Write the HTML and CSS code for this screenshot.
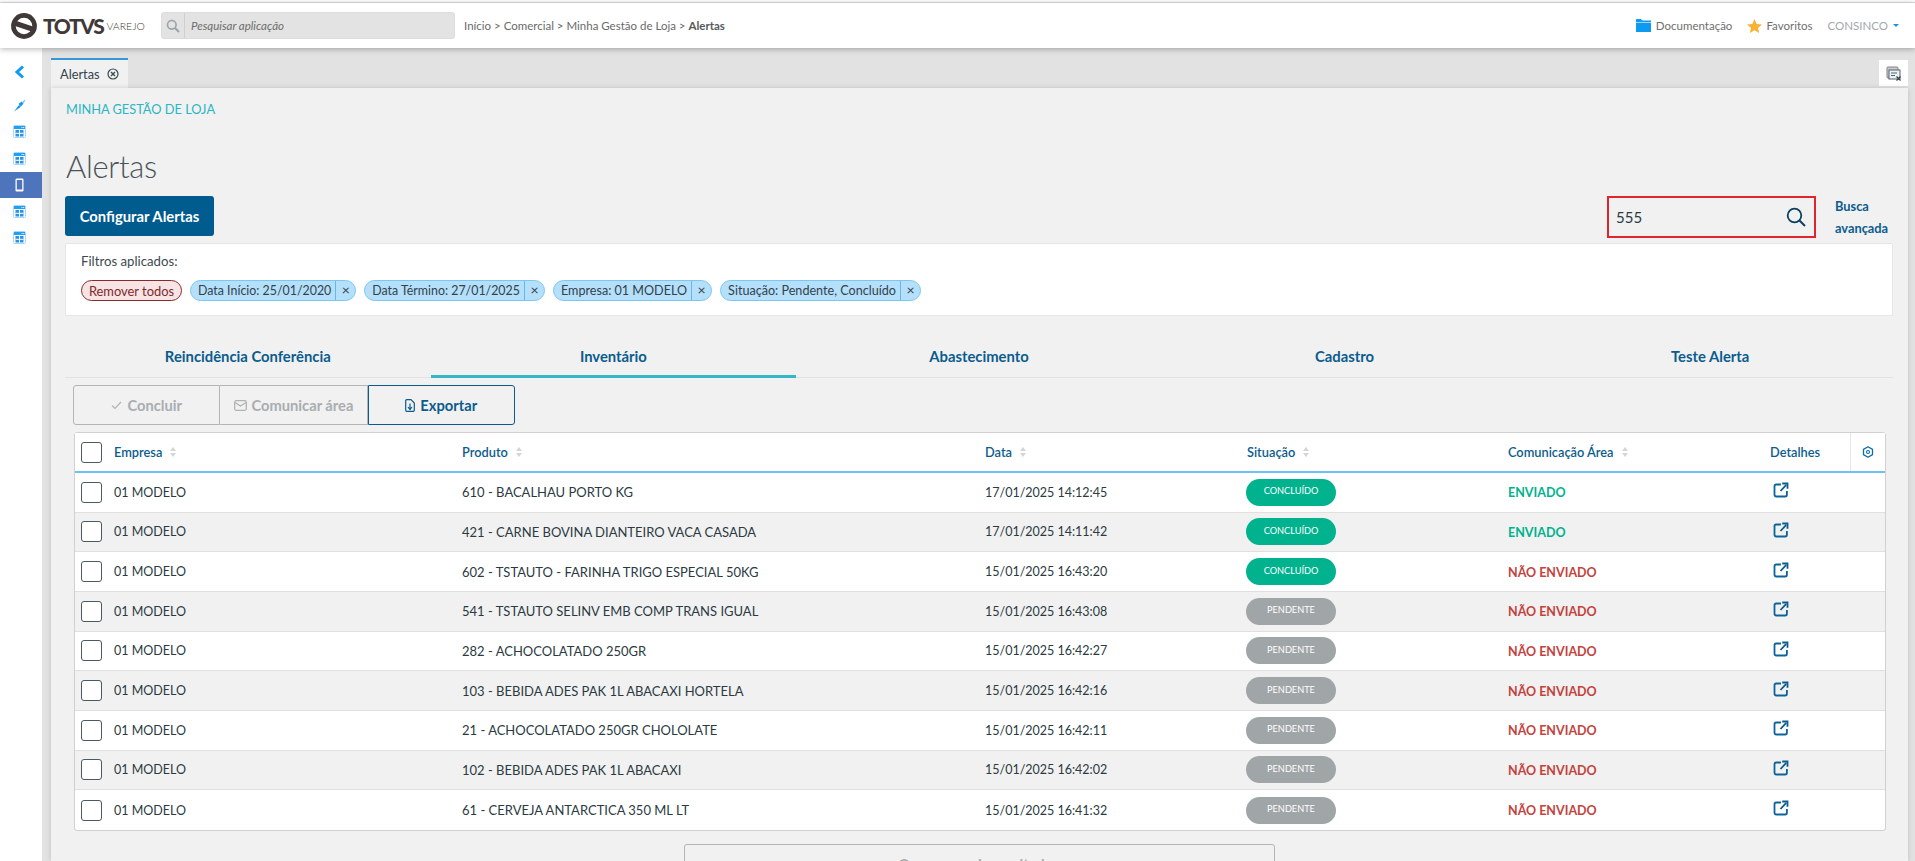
FILE: index.html
```html
<!DOCTYPE html>
<html lang="pt-BR">
<head>
<meta charset="utf-8">
<title>Alertas</title>
<link rel="stylesheet" href="styles.css">
</head>
<body>
<svg class="defs" width="0" height="0" aria-hidden="true">
  <symbol id="i-cal" viewBox="0 0 13 13">
    <rect x=".5" y=".5" width="12" height="12" rx="1" fill="#fff" stroke="#a9d6fb"/>
    <rect x="1" y="1" width="11" height="3" fill="#1ea0f5"/>
    <rect x="2.5" y="5" width="3.5" height="6.5" fill="#2a95e6"/>
    <rect x="7" y="5" width="3.5" height="6.5" fill="#2a95e6"/>
    <rect x="2.5" y="7.8" width="8" height="1" fill="#fff"/>
    <rect x="8.5" y="2" width="1" height="1" fill="#fff"/>
    <rect x="10.2" y="2" width="1" height="1" fill="#fff"/>
  </symbol>
  <symbol id="i-open" viewBox="0 0 16 16">
    <path d="M8 2.5H3.2A1.7 1.7 0 0 0 1.5 4.2v8.6a1.7 1.7 0 0 0 1.7 1.7h9a1.7 1.7 0 0 0 1.7-1.7V9" fill="none" stroke="#0b6499" stroke-width="1.8"/>
    <path d="M7.5 9 13 3.2M9.2 1.5h5.3v5.3" fill="none" stroke="#0b5c8e" stroke-width="1.8"/>
  </symbol>
  <symbol id="i-sort" viewBox="0 0 6 10">
    <path d="M3 0 6 4H0zM3 10 0 6h6z" fill="#d3d6d8"/>
  </symbol>
</svg>

<div class="topline"></div>
<header class="topbar">
  <div class="brand">
    <svg class="brand-mark" viewBox="0 0 26 26"><circle cx="13" cy="13" r="10.6" fill="none" stroke="#3f3a38" stroke-width="4.6"/><path d="M4 7.5 22 13.500v5.500L4 13z" fill="#3f3a38"/></svg>
    <span class="brand-name">TOTVS</span>
    <span class="brand-sub">VAREJO</span>
  </div>
  <div class="appsearch">
    <span class="appsearch-icon"><svg width="14" height="14" viewBox="0 0 14 14"><circle cx="5.8" cy="5.8" r="4.3" fill="none" stroke="#9aa3a8" stroke-width="1.6"/><path d="m9 9 4 4" stroke="#9aa3a8" stroke-width="2"/></svg></span>
    <span class="appsearch-text">Pesquisar aplicação</span>
  </div>
  <nav class="crumbs">Início &gt; Comercial &gt; Minha Gestão de Loja &gt; <b>Alertas</b></nav>
  <div class="toplinks">
    <svg class="folder" width="15" height="13" viewBox="0 0 15 13"><path d="M0 1.2C0 .5.5 0 1.2 0h3.6l1.4 1.6H15V3H0z" fill="#0f9af2"/><rect y="3.6" width="15" height="9.4" fill="#0f9af2"/></svg>
    <span class="toplink">Documentação</span>
    <svg class="star" width="15" height="14" viewBox="0 0 15 14"><path d="m7.5 0 2.2 4.9 5.3.5-4 3.5 1.2 5.1-4.7-2.7L2.8 14 4 8.9 0 5.4l5.3-.5z" fill="#f9b233"/></svg>
    <span class="toplink">Favoritos</span>
    <span class="userlink">CONSINCO</span>
    <span class="caret"></span>
  </div>
</header>

<div class="shell">
  <aside class="sidebar">
    <div class="side-back"><svg width="11" height="14" viewBox="0 0 11 14"><path d="M9 1.5 3 7l6 5.5" fill="none" stroke="#0f9af2" stroke-width="3"/></svg></div>
    <div class="side-item"><svg width="13" height="13" viewBox="0 0 13 13"><path d="M1 12.5 6 6l2 1.8z" fill="#1a8fe6"/><path d="m5.5 5 3-2.5 2 2-2.5 3z" fill="#0f9af2"/><path d="M9 3.500 11.500.8l.8.8L10 4.500z" fill="#6cc0f7"/></svg></div>
    <div class="side-item"><svg class="cal"><use href="#i-cal"/></svg></div>
    <div class="side-item"><svg class="cal"><use href="#i-cal"/></svg></div>
    <div class="side-item is-active"><svg width="9" height="14" viewBox="0 0 9 14"><rect x=".5" y=".5" width="8" height="13" rx="1.2" fill="#fff"/><rect x="1.8" y="2" width="5.4" height="9.5" fill="#4e75bb"/></svg></div>
    <div class="side-item"><svg class="cal"><use href="#i-cal"/></svg></div>
    <div class="side-item"><svg class="cal"><use href="#i-cal"/></svg></div>
  </aside>

  <div class="workspace">
    <div class="tabbar">
      <div class="doc-tab">Alertas
        <svg width="12" height="12" viewBox="0 0 12 12"><circle cx="6" cy="6" r="5" fill="none" stroke="#3d4a52" stroke-width="1.2"/><path d="m4 4 4 4M8 4 4 8" stroke="#3d4a52" stroke-width="1.4"/></svg>
      </div>
      <div class="tool-box"><svg width="15" height="15" viewBox="0 0 15 15"><rect x="1" y="1" width="11" height="11" rx="1" fill="#c7cdd1" stroke="#8d7f86"/><rect x="3" y="4" width="11" height="9" fill="#eef0f1" stroke="#4e6472"/><path d="M5 7h6M5 9.500h4" stroke="#4e6472"/><path d="m10.500 10.500 4 4M14.500 10.500l-4 4" stroke="#33424c" stroke-width="1.2"/></svg></div>
    </div>

    <main class="content">
      <div class="section-name">MINHA GESTÃO DE LOJA</div>
      <h1 class="page-title">Alertas</h1>

      <div class="head-row">
        <button class="btn-primary">Configurar Alertas</button>
        <div class="head-right">
          <div class="quicksearch">
            <span>555</span>
            <svg width="20" height="20" viewBox="0 0 20 20"><circle cx="8.500" cy="8.500" r="6.800" fill="none" stroke="#0b3f60" stroke-width="1.800"/><path d="m13.500 13.500 5.500 5.500" stroke="#0b3f60" stroke-width="2"/></svg>
          </div>
          <a class="advanced">Busca avançada</a>
        </div>
      </div>

      <section class="filters">
        <div class="filters-title">Filtros aplicados:</div>
        <div class="chips">
          <span class="chip-remove">Remover todos</span>
          <span class="chip"><span class="chip-label">Data Início: 25/01/2020</span><span class="chip-x">×</span></span>
          <span class="chip"><span class="chip-label">Data Término: 27/01/2025</span><span class="chip-x">×</span></span>
          <span class="chip chip-wide"><span class="chip-label">Empresa: 01 MODELO</span><span class="chip-x">×</span></span>
          <span class="chip chip-wide"><span class="chip-label">Situação: Pendente, Concluído</span><span class="chip-x">×</span></span>
        </div>
      </section>

      <nav class="tabs">
        <div class="tab">Reincidência Conferência</div>
        <div class="tab is-active">Inventário</div>
        <div class="tab">Abastecimento</div>
        <div class="tab">Cadastro</div>
        <div class="tab">Teste Alerta</div>
      </nav>

      <div class="actions">
        <button class="act is-disabled"><svg width="11" height="9" viewBox="0 0 11 9"><path d="m1 4.500 3 3 6-6.500" fill="none" stroke="#b0b3b5" stroke-width="1.2"/></svg>Concluir</button>
        <button class="act is-disabled"><svg width="13" height="11" viewBox="0 0 13 11"><rect x=".7" y=".7" width="11.6" height="9.6" rx="1.5" fill="none" stroke="#b0b3b5" stroke-width="1.3"/><path d="m1 2.500 5.500 3.500 5.500-3.500" fill="none" stroke="#b0b3b5" stroke-width="1.2"/></svg>Comunicar área</button>
        <button class="act is-on"><svg width="10" height="13" viewBox="0 0 10 13"><path d="M6 .7H1.700a1 1 0 0 0-1 1v9.600a1 1 0 0 0 1 1h6.600a1 1 0 0 0 1-1V4z" fill="none" stroke="#0b5c8e" stroke-width="1.2"/><path d="M5 4.500v5.500M3 8l2 2.500L7 8" fill="none" stroke="#0b5c8e" stroke-width="1.2"/></svg>Exportar</button>
      </div>

      <section class="grid">
        <div class="row row-head">
          <div class="cell first"><span class="check"></span>Empresa <svg class="sort"><use href="#i-sort"/></svg></div>
          <div class="cell">Produto <svg class="sort"><use href="#i-sort"/></svg></div>
          <div class="cell">Data <svg class="sort"><use href="#i-sort"/></svg></div>
          <div class="cell">Situação <svg class="sort"><use href="#i-sort"/></svg></div>
          <div class="cell">Comunicação Área <svg class="sort"><use href="#i-sort"/></svg></div>
          <div class="cell">Detalhes</div>
          <div class="cell gear-cell"><svg width="12" height="12" viewBox="0 0 12 12"><path d="M6 .8 10.500 3.400v5.200L6 11.200 1.500 8.600V3.400z" fill="none" stroke="#0b6ea8" stroke-width="1.3" stroke-linejoin="round"/><circle cx="6" cy="6" r="1.500" fill="none" stroke="#0b6ea8" stroke-width="1.1"/></svg></div>
        </div>

        <div class="row"><div class="cell first"><span class="check"></span>01 MODELO</div><div class="cell">610 - BACALHAU PORTO KG</div><div class="cell">17/01/2025 14:12:45</div><div class="cell"><span class="pill ok">CONCLUÍDO</span></div><div class="cell"><span class="sent">ENVIADO</span></div><div class="cell"><svg class="open"><use href="#i-open"/></svg></div><div class="cell"></div></div>
        <div class="row"><div class="cell first"><span class="check"></span>01 MODELO</div><div class="cell">421 - CARNE BOVINA DIANTEIRO VACA CASADA</div><div class="cell">17/01/2025 14:11:42</div><div class="cell"><span class="pill ok">CONCLUÍDO</span></div><div class="cell"><span class="sent">ENVIADO</span></div><div class="cell"><svg class="open"><use href="#i-open"/></svg></div><div class="cell"></div></div>
        <div class="row"><div class="cell first"><span class="check"></span>01 MODELO</div><div class="cell">602 - TSTAUTO - FARINHA TRIGO ESPECIAL 50KG</div><div class="cell">15/01/2025 16:43:20</div><div class="cell"><span class="pill ok">CONCLUÍDO</span></div><div class="cell"><span class="unsent">NÃO ENVIADO</span></div><div class="cell"><svg class="open"><use href="#i-open"/></svg></div><div class="cell"></div></div>
        <div class="row"><div class="cell first"><span class="check"></span>01 MODELO</div><div class="cell">541 - TSTAUTO SELINV EMB COMP TRANS IGUAL</div><div class="cell">15/01/2025 16:43:08</div><div class="cell"><span class="pill wait">PENDENTE</span></div><div class="cell"><span class="unsent">NÃO ENVIADO</span></div><div class="cell"><svg class="open"><use href="#i-open"/></svg></div><div class="cell"></div></div>
        <div class="row"><div class="cell first"><span class="check"></span>01 MODELO</div><div class="cell">282 - ACHOCOLATADO 250GR</div><div class="cell">15/01/2025 16:42:27</div><div class="cell"><span class="pill wait">PENDENTE</span></div><div class="cell"><span class="unsent">NÃO ENVIADO</span></div><div class="cell"><svg class="open"><use href="#i-open"/></svg></div><div class="cell"></div></div>
        <div class="row"><div class="cell first"><span class="check"></span>01 MODELO</div><div class="cell">103 - BEBIDA ADES PAK 1L ABACAXI HORTELA</div><div class="cell">15/01/2025 16:42:16</div><div class="cell"><span class="pill wait">PENDENTE</span></div><div class="cell"><span class="unsent">NÃO ENVIADO</span></div><div class="cell"><svg class="open"><use href="#i-open"/></svg></div><div class="cell"></div></div>
        <div class="row"><div class="cell first"><span class="check"></span>01 MODELO</div><div class="cell">21 - ACHOCOLATADO 250GR CHOLOLATE</div><div class="cell">15/01/2025 16:42:11</div><div class="cell"><span class="pill wait">PENDENTE</span></div><div class="cell"><span class="unsent">NÃO ENVIADO</span></div><div class="cell"><svg class="open"><use href="#i-open"/></svg></div><div class="cell"></div></div>
        <div class="row"><div class="cell first"><span class="check"></span>01 MODELO</div><div class="cell">102 - BEBIDA ADES PAK 1L ABACAXI</div><div class="cell">15/01/2025 16:42:02</div><div class="cell"><span class="pill wait">PENDENTE</span></div><div class="cell"><span class="unsent">NÃO ENVIADO</span></div><div class="cell"><svg class="open"><use href="#i-open"/></svg></div><div class="cell"></div></div>
        <div class="row"><div class="cell first"><span class="check"></span>01 MODELO</div><div class="cell">61 - CERVEJA ANTARCTICA 350 ML LT</div><div class="cell">15/01/2025 16:41:32</div><div class="cell"><span class="pill wait">PENDENTE</span></div><div class="cell"><span class="unsent">NÃO ENVIADO</span></div><div class="cell"><svg class="open"><use href="#i-open"/></svg></div><div class="cell"></div></div>
      </section>

      <button class="load-more">Carregar mais resultados</button>
    </main>
  </div>
</div>
</body>
</html>
```

FILE: styles.css
```css
* { box-sizing: border-box; }
html, body { margin: 0; height: 861px; overflow: hidden; }
body { font-family: "Lato", "Open Sans", sans-serif; font-size: 12px; color: #2b3a42; background: #f1f1f1; }
.defs { display: block; height: 0; }

.topline { height: 3px; background: #fff; border-bottom: 1px solid #e0e0e0; }
.topbar { position: relative; z-index: 2; height: 45px; background: #fff; box-shadow: 0 1px 6px rgba(0,0,0,.3); display: flex; align-items: center; }
.brand { display: flex; align-items: center; width: 161px; padding-left: 11px; }
.brand-mark { width: 26px; height: 26px; }
.brand-name { font-size: 21px; font-weight: 900; color: #3f3a38; margin-left: 6px; letter-spacing: -1.4px; }
.brand-sub { font-size: 10.5px; font-weight: 300; color: #3f3a38; margin-left: 3px; }
.appsearch { width: 294px; height: 27px; background: #e3e3e3; border: 1px solid #dcdcdc; border-radius: 3px; display: flex; align-items: center; }
.appsearch-icon { width: 23px; height: 25px; border-right: 1px solid #cfcfcf; display: flex; align-items: center; justify-content: center; }
.appsearch-text { font-style: italic; font-size: 11.5px; color: #6d6d6d; margin-left: 6px; }
.crumbs { margin-left: 9px; font-size: 11.5px; color: #6a6a6a; }
.crumbs b { font-weight: 700; color: #55595c; }
.toplinks { margin-left: auto; margin-right: 16px; display: flex; align-items: center; }
.toplink { font-size: 11.5px; color: #6f6f6f; margin-left: 5px; }
.star { margin-left: 15px; }
.star + .toplink { margin-left: 4px; }
.userlink { font-size: 11.5px; color: #a3a8ad; margin-left: 15px; }
.caret { margin-left: 5px; border: 3px solid transparent; border-top: 3px solid #1a8fe6; border-bottom: 0; }

.shell { display: flex; height: 813px; }
.sidebar { width: 42px; background: #fff; flex: none; padding-top: 10px; }
.side-back { height: 28px; display: flex; align-items: center; justify-content: center; margin-bottom: 6px; padding-right: 4px; }
.side-item { height: 26.5px; display: flex; align-items: center; justify-content: center; padding-right: 4px; }
.side-item.is-active { background: #4e75bb; }
.cal { width: 13px; height: 13px; }

.workspace { flex: 1; min-width: 0; background: #e2e2e2; padding: 0 7px 0 9px; display: flex; flex-direction: column; }
.tabbar { height: 40px; flex: none; display: flex; align-items: flex-start; justify-content: space-between; padding-top: 10px; }
.doc-tab { width: 77px; height: 30px; border-top: 2px solid #3498db; background: #f1f1f1; display: flex; align-items: center; padding-left: 9px; gap: 7px; font-size: 12.8px; color: #33424c; }
.tool-box { width: 29px; height: 26px; margin-top: 2px; background: #fff; display: flex; align-items: center; justify-content: center; }

.content { flex: 1; min-height: 0; background: #f1f1f1; padding: 11px 15px 0 14px; box-shadow: 0 0 5px rgba(0,0,0,.15); overflow: hidden; }
.section-name { height: 20px; line-height: 20px; margin-left: 1px; font-size: 12.8px; color: #29b6c5; }
.page-title { margin: 27px 0 0 1px; height: 40px; line-height: 40px; font-size: 31px; font-weight: 300; letter-spacing: -.3px; color: #4a5358; }
.head-row { margin-top: 10px; height: 42px; display: flex; justify-content: space-between; align-items: flex-start; }
.btn-primary { width: 149px; height: 40px; border: 0; border-radius: 3px; background: #005b8f; color: #fff; font: 700 14.8px "Lato", sans-serif; padding: 0; }
.head-right { display: flex; align-items: flex-start; }
.quicksearch { width: 209px; height: 42px; border: 2px solid #e0262c; display: flex; align-items: center; justify-content: space-between; padding: 0 8px 0 7px; font-size: 15px; color: #2b3a42; margin-right: 19px; }
.advanced { width: 58px; font-size: 12.8px; font-weight: 700; line-height: 22px; color: #0b5c8e; margin-top: -1px; }

.filters { margin-top: 5px; height: 73px; background: #fff; border: 1px solid #e6e6e6; border-radius: 2px; padding: 9px 15px 0; }
.filters-title { font-size: 13.2px; color: #3e4a50; height: 16px; line-height: 16px; }
.chips { display: flex; gap: 8px; margin-top: 11px; }
.chip-remove { width: 101px; height: 21px; border: 1px solid #8a2a2a; border-radius: 11px; background: #f8e4e4; color: #7c2b2b; display: flex; align-items: center; justify-content: center; font-size: 12.9px; }
.chip { height: 21px; border: 1px solid #7cc6f2; border-radius: 11px; background: #b4e0fb; display: flex; align-items: stretch; font-size: 12.4px; color: #33424c; }
.chip-wide { font-size: 12.6px; }
.chip-label { padding: 0 4px 0 7px; line-height: 19px; border-right: 1px solid #6bb6e6; }
.chip-x { width: 19px; text-align: center; line-height: 18px; font-size: 14px; color: #33424c; }

.tabs { margin-top: 20px; height: 42px; display: flex; border-bottom: 1px solid #e2e2e2; }
.tab { flex: 1; text-align: center; font-size: 14.8px; font-weight: 700; line-height: 40px; color: #0b5c8e; }
.tab.is-active { border-bottom: 3px solid #36b7c4; margin-bottom: -1px; }

.actions { margin: 7px 0 0 8px; display: flex; }
.act { width: 147.3px; height: 40px; background: transparent; border: 1px solid #b5b5b5; display: flex; align-items: center; justify-content: center; gap: 5px; font: 700 14.7px "Lato", sans-serif; padding: 0; }
.act:first-child { border-radius: 3px 0 0 3px; }
.act.is-disabled { color: #a9adb0; }
.act.is-disabled + .act.is-disabled { border-left: 0; }
.act.is-on { border: 1px solid #0b5c8e; color: #0b5c8e; border-radius: 0 3px 3px 0; }

.grid { margin: 7px 7px 0 9px; background: #fff; border: 1px solid #d0d0d0; border-radius: 3px; }
.row { display: grid; grid-template-columns: 387px 523px 262px 261px 262px 80px 35px; height: 39.67px; border-bottom: 1px solid #e0e0e0; font-size: 12.5px; color: #2b3a42; align-items: center; }
.row > .cell:nth-child(2) { font-size: 13px; }
.row:nth-child(odd) { background: #f1f1f1; }
.row:last-child { border-bottom: 0; }
.row.row-head { height: 40px; background: #fff; border-bottom: 2px solid #6ec1f5; color: #0b5c8e; font-weight: 600; font-size: 12.8px; }
.row.row-head > .cell:nth-child(2) { font-size: 12.8px; }
.cell { display: flex; align-items: center; height: 100%; }
.first { padding-left: 6px; }
.check { width: 21px; height: 21px; border: 1px solid #4a5a63; border-radius: 3px; background: #fff; margin-right: 12px; flex: none; }
.sort { width: 6px; height: 10px; margin-left: 8px; }
.gear-cell { border-left: 1px solid #e6e6e6; justify-content: center; }
.pill { width: 90px; height: 27px; border-radius: 14px; color: #fff; font-size: 9.2px; display: flex; align-items: center; justify-content: center; padding-bottom: 3px; margin-left: -1px; }
.pill.ok { background: #00b28e; }
.pill.wait { background: #a0a6a8; }
.sent { color: #00b28e; font-weight: 700; padding-top: 1px; }
.unsent { color: #c4423c; font-weight: 700; padding-top: 1px; }
.open { width: 16px; height: 16px; margin: -4px 0 0 3px; }

.load-more { display: block; margin: 13px auto 0; width: 591px; height: 40px; background: transparent; border: 1px solid #b5b5b5; border-radius: 3px; color: #a9adb0; font: 700 14.7px "Lato", sans-serif; }
```
